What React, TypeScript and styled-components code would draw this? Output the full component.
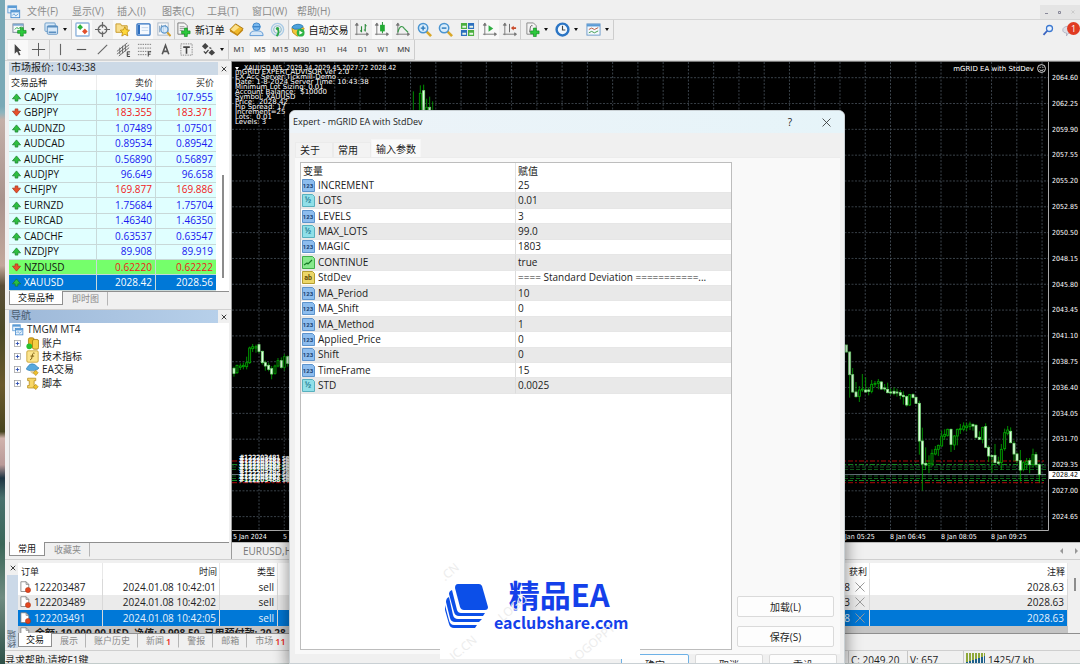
import React from 'react';
import styled, { createGlobalStyle } from 'styled-components';

const UI = `"Open Sans", "Noto Sans CJK SC", sans-serif`;
const CHART = `"DejaVu Sans Condensed", "Liberation Sans", sans-serif`;
const CHART_WIDE = `"DejaVu Sans", "Liberation Sans", sans-serif`;

const Global = createGlobalStyle`
  * { box-sizing: border-box; }
  body { margin: 0; font: 10px/14px ${UI}; color: #1c1c1c; background: #f0f0f0; }
  button { font: inherit; color: inherit; background: none; border: 0; padding: 0; margin: 0; white-space: nowrap; }
  table { border-collapse: separate; border-spacing: 0; table-layout: fixed; width: 100%; }
  th { font-weight: 400; }
  th, td { padding: 0; white-space: nowrap; overflow: hidden; }
  svg { display: block; flex: none; }
`;

/* ---------- frame ---------- */
const Desktop = styled.div`
  position: relative;
  display: grid;
  grid-template-columns: 5px minmax(0, 1fr);
  height: 100vh;
  overflow: hidden;
`;
const Wallpaper = styled.div`
  background: linear-gradient(#7aa9b6 0 16%, #8eb4bd 17%, #c4b0a8 18%, #a9938d 30%, #c3a89c 40%, #5a4f38 43%, #4b4a26 50%, #6a5a2c 58%, #47451f 65%, #d0b3ac 66%, #b99a98 70%, #1c3442 72%, #48706c 75%, #3a6658 82%, #6f8b80 90%, #2f5148 100%);
`;
const Win = styled.div`
  display: flex;
  flex-direction: column;
  min-width: 0;
  height: 100vh;
  background: #f0f0f0;
  border-bottom: 1px solid #c3cccb;
`;
const MenuBar = styled.nav`
  display: flex;
  align-items: flex-end;
  flex: none;
  height: 20px;
  padding-left: 2px;
  border-bottom: 1px solid #d5d5d5;
`;
const MenuItem = styled.button`
  width: 45px;
  height: 17px;
  padding-left: 6px;
  text-align: left;
  color: #8b8b8b;
`;
const WinControls = styled.div`
  display: flex;
  margin-left: auto;
  width: 40px;
  height: 14px;
  background: #e4e4e4;
`;
const WinControl = styled.button`
  flex: 1;
  display: grid;
  place-items: center;
`;
const Toolbar = styled.div`
  display: flex;
  align-items: stretch;
  flex: none;
  height: 20px;
  padding-left: 2px;
`;
const Tools = styled.div<{ $w: number }>`
  display: flex;
  justify-content: space-around;
  align-items: stretch;
  width: ${p => p.$w}px;
  flex: none;
  border-right: 1px solid #cdcdcd;
  border-bottom: 1px solid #d8d8d8;
`;
const Tool = styled.button<{ $on?: boolean; $w?: number }>`
  display: flex;
  align-items: center;
  justify-content: center;
  gap: 4px;
  width: ${p => p.$w ?? 20}px;
  background: ${p => (p.$on ? '#f9f9f9' : 'transparent')};
  color: #111;
`;
const Period = styled(Tool)`
  font: 8px/12px Roboto, sans-serif;
  color: #444;
`;
const Caret = styled.i<{ $c?: string }>`
  border: 2px solid transparent;
  border-top: 3px solid ${p => p.$c ?? '#111'};
  border-bottom: 0;
`;
const ToolbarEnd = styled.div`
  display: flex;
  align-items: center;
  gap: 8px;
  margin-left: auto;
`;
const Badge = styled.span`
  position: absolute;
  top: -2px;
  right: 0;
  width: 13px;
  height: 13px;
  border-radius: 7px;
  background: #e03a22;
  color: #fff;
  font: 9px/13px ${UI};
  text-align: center;
`;
const Notice = styled.button`
  position: relative;
  width: 18px;
  height: 12px;
`;

/* ---------- side panels ---------- */
const Body = styled.div`
  display: flex;
  flex: 1;
  min-height: 0;
  border-top: 1px solid #d4d4d4;
`;
const Side = styled.aside`
  display: flex;
  flex-direction: column;
  width: 227px;
  flex: none;
  padding: 1px 2px 1px 4px;
  border-right: 1px solid #9b9b9b;
`;
const PanelTitle = styled.header<{ $active?: boolean }>`
  display: flex;
  flex: none;
  justify-content: space-between;
  height: 13px;
  line-height: 11px;
  color: #222;
  > span {
    flex: 1;
    padding-left: 2px;
    color: ${p => (p.$active ? '#4a5c70' : '#222')};
    background: ${p => (p.$active ? 'linear-gradient(90deg, #9db8d8, #b7d0ea)' : '#ccd9e6')};
  }
`;
const Close = styled.button`
  display: grid;
  place-items: center;
  width: 11px;
`;
const Quotes = styled.div`
  display: flex;
  flex: none;
  height: 216px;
  background: #fff;
`;
const QuoteTable = styled.table`
  width: 207px;
  height: 216px;
  flex: none;
  th:nth-child(n + 2) { text-align: right; padding-right: 2px; }
  th { height: 15px; border-right: 1px solid #ececec; text-align: left; padding-left: 2px; font-size: 9px; line-height: 13px; }
  th:last-child { border: 0; }
`;
const QuoteRow = styled.tr<{ $kind: string }>`
  line-height: 13px;
  td {
    background: ${p => (p.$kind === 'hit' ? '#75ff6b' : p.$kind === 'sel' ? '#0078d7' : '#e0ffff')};
    border-right: 1px solid #c8dada;
    border-bottom: 1px solid #c8d8d8;
    color: ${p => (p.$kind === 'sel' ? '#fff' : '#111')};
  }
  td:last-child { border-right: 0; }
`;
const Price = styled.td<{ $down: boolean; $sel: boolean }>`
  && {
    text-align: right;
    padding-right: 3px;
    color: ${p => (p.$sel ? '#fff' : p.$down ? '#f01818' : '#1818f0')};
  }
`;
const IconText = styled.span<{ $pad: number }>`
  display: flex;
  align-items: center;
  gap: 3px;
  padding-left: ${p => p.$pad}px;
`;
const ScrollThumb = styled.i<{ $top: number; $h: number }>`
  width: 2px;
  height: ${p => p.$h}px;
  margin: ${p => p.$top}px 0 0 6px;
  background: #8c8c8c;
`;
const TermScroll = styled.div`
  width: 12px;
  flex: none;
  ${ScrollThumb} { display: block; }
`;
const TabStrip = styled.div<{ $pad?: number }>`
  display: flex;
  flex: none;
  height: 16px;
  border-top: 1px solid #8f8f8f;
  font-size: 9px;
  > button { padding: 0 ${p => p.$pad ?? 8}px; }
`;
const PanelTab = styled.button<{ $on?: boolean }>`
  height: 14px;
  margin-top: ${p => (p.$on ? -1 : 0)}px;
  line-height: 14px;
  color: ${p => (p.$on ? '#111' : '#8a8a8a')};
  background: ${p => (p.$on ? '#fff' : 'transparent')};
  border: 1px solid ${p => (p.$on ? '#8f8f8f' : 'transparent')};
  border-top: 0;
  border-right-color: ${p => (p.$on ? '#8f8f8f' : '#b5b5b5')};
  sup { margin-left: 2px; font-size: 9px; line-height: 8px; vertical-align: -1px; font-weight: 600; color: #e21; }
`;
const Split = styled.div`
  flex: none;
  height: 3px;
  margin: 0 -2px 0 -4px;
  border-bottom: 1px solid #d0d0d0;
`;
const Tree = styled.div`
  flex: 1;
  min-height: 0;
  background: #fff;
  border-left: 1px solid #ccc;
  padding: 0 0 0 2px;
`;
const TreeRows = styled.div`
  display: grid;
  grid-auto-rows: 1fr;
  height: 67px;
  line-height: 13px;
`;
const TreeRow = styled.div<{ $child?: boolean }>`
  display: flex;
  align-items: center;
  gap: 3px;
  padding-left: ${p => (p.$child ? 2 : 0)}px;
  > svg + svg { margin-left: 2px; }
`;

/* ---------- chart ---------- */
const ChartArea = styled.main`
  display: flex;
  flex-direction: column;
  flex: 1;
  min-width: 0;
`;
const ChartBox = styled.div`
  position: relative;
  display: grid;
  grid-template-columns: minmax(0, 1fr) 31px;
  flex: 1;
  min-height: 0;
  overflow: hidden;
  background: #000;
  border-top: 1px solid #777;
  font: 7px/8px ${CHART};
  color: #fff;
`;
const Plot = styled.div`
  display: flex;
  overflow: hidden;
`;
const PriceAxis = styled.div`
  display: flex;
  flex-direction: column;
  justify-content: space-between;
  height: 447px;
  margin-top: 12px;
  padding-left: 3px;
`;
const PriceTag = styled.span`
  position: absolute;
  right: 0;
  top: 409px;
  width: 31px;
  height: 8px;
  padding-left: 3px;
  background: #fff;
  color: #000;
`;
const Comment = styled.div`
  position: absolute;
  left: 3px;
  top: 8px;
  font-family: ${CHART_WIDE};
  line-height: 5px;
  white-space: pre;
`;
const Ticker = styled.div`
  position: absolute;
  left: 3px;
  top: 2px;
  display: flex;
  align-items: center;
  gap: 5px;
  white-space: pre;
`;
const Advisor = styled.div`
  position: absolute;
  right: 34px;
  top: 2px;
  display: flex;
  align-items: center;
  gap: 3px;
  font-family: ${CHART_WIDE};
`;
const ChartTabs = styled.div`
  display: flex;
  align-items: center;
  justify-content: space-between;
  flex: none;
  height: 17px;
  padding: 0 2px 0 11px;
  border-top: 1px solid #bbb;
  color: #777;
`;
const Arrows = styled.div`
  display: flex;
  gap: 10px;
`;

/* ---------- terminal ---------- */
const Terminal = styled.section`
  display: grid;
  grid-template-columns: 13px minmax(0, 1fr);
  flex: none;
  height: 91px;
  border-top: 1px solid #cfcfcf;
`;
const TermGrip = styled.div`
  display: grid;
  grid-template-rows: 15px 1fr;
  padding: 0 1px 2px 2px;
`;
const TermName = styled.span`
  background: #cbd9e8;
  writing-mode: vertical-rl;
  transform: rotate(180deg);
  font-size: 9px;
  line-height: 10px;
  color: #53616f;
`;
const TermMain = styled.div`
  display: flex;
  flex-direction: column;
  min-width: 0;
  padding-top: 3px;
`;
const TermBody = styled.div`
  display: flex;
  height: 70px;
  overflow: hidden;
`;
const TermTables = styled.div`
  flex: 1;
  min-width: 0;
  background: #c4c4c4;
`;
const Orders = styled.table`
  height: 63px;
  background: #fff;
  th { height: 16px; text-align: right; font-size: 9px; line-height: 15px; padding-right: 2px; border-right: 1px solid #e8e8e8; }
  th:first-child { text-align: left; padding-left: 3px; }
  td { text-align: right; padding-right: 3px; border-right: 1px solid #d9d9d9; line-height: 14px; }
`;
const OrderRow = styled.tr<{ $bg: string; $fg: string }>`
  background: ${p => p.$bg};
  color: ${p => p.$fg};
`;
const Profit = styled.span`
  display: flex;
  align-items: center;
  justify-content: flex-end;
  gap: 4px;
`;
const Summary = styled.div`
  display: flex;
  align-items: center;
  gap: 4px;
  padding-left: 1px;
  font-weight: 700;
  line-height: 14px;
  white-space: pre;
`;
const StatusBar = styled.footer`
  display: flex;
  flex: none;
  justify-content: space-between;
  height: 13px;
  overflow: hidden;
  border-top: 1px solid #cfcfcf;
  line-height: 18px;
`;
const StatusCells = styled.div`
  display: grid;
  grid-template-columns: 59px 56px 117px;
`;
const StatusCell = styled.span`
  display: flex;
  align-items: flex-start;
  gap: 3px;
  padding-left: 2px;
  border-left: 1px solid #c6c6c6;
  svg { margin-top: 2px; }
`;

/* ---------- dialog ---------- */
const Dialog = styled.div`
  position: absolute;
  left: 289px;
  top: 110px;
  bottom: 0;
  width: 556px;
  display: flex;
  flex-direction: column;
  overflow: hidden;
  background: #f0f0f0;
  border: 1px solid #c9d0d4;
  border-radius: 6px 6px 0 0;
`;
const Shade = styled.div`
  position: absolute;
  left: 289px;
  top: 110px;
  bottom: 0;
  width: 556px;
  box-shadow: 0 3px 14px 2px rgba(0, 0, 0, 0.4);
`;
const DialogTitle = styled.header`
  display: flex;
  align-items: center;
  flex: none;
  height: 22px;
  padding: 0 8px 0 3px;
  background: linear-gradient(90deg, #edf3f8, #e6f4f9);
  > span { flex: 1; font-size: 9px; }
`;
const TitleButton = styled.button`
  display: grid;
  place-items: center;
  width: 20px;
  height: 20px;
  margin-left: 16px;
`;
const DialogTabs = styled.div`
  display: flex;
  align-items: flex-end;
  flex: none;
  height: 24px;
  padding-left: 5px;
`;
const DialogTab = styled.button<{ $on?: boolean }>`
  height: ${p => (p.$on ? 18 : 15)}px;
  width: ${p => (p.$on ? 50 : 38)}px;
  padding-left: 4px;
  text-align: left;
  background: ${p => (p.$on ? '#fafafa' : '#f3f3f3')};
  border: 1px solid ${p => (p.$on ? '#f6f6f6' : '#ebebeb')};
  border-bottom: 0;
  line-height: ${p => (p.$on ? 14 : 13)}px;
`;
const DialogPanel = styled.div`
  display: flex;
  justify-content: space-between;
  flex: 1;
  min-height: 0;
  margin: 0 4px 0 5px;
  padding: 4px 6px 4px 5px;
  background: #f9f9f9;
  border-top: 1px solid #ececec;
`;
const ParamList = styled.div`
  width: 432px;
  background: #fff;
  border: 1px solid #bdbdbd;
`;
const Params = styled.table`
  height: 231px;
  th { height: 15px; text-align: left; line-height: 14px; padding-left: 2px; border-right: 1px solid #e3e3e3; }
  th:last-child, td:last-child { border-right: 0; }
  td { padding-left: 2px; line-height: 13px; border-right: 1px solid #dcdcdc; border-bottom: 1px solid #e6e6e6; text-overflow: ellipsis; }
  td:first-child { padding-left: 1px; }
  tbody tr:nth-child(even) { background: #e9e9e9; }
`;
const ParamName = styled.span`
  display: flex;
  align-items: center;
  gap: 3px;
`;
const SideButtons = styled.div`
  display: flex;
  flex-direction: column;
  justify-content: flex-end;
  gap: 9px;
  padding-bottom: 3px;
`;
const PushButton = styled.button<{ $w: number; $primary?: boolean }>`
  flex: none;
  width: ${p => p.$w}px;
  height: 21px;
  line-height: 18px;
  background: #fdfdfd;
  border: 1px solid ${p => (p.$primary ? '#6db1e6' : '#dadada')};
  border-radius: 2px;
`;
const DialogFooter = styled.footer`
  display: flex;
  justify-content: flex-end;
  gap: 6px;
  flex: none;
  height: 9px;
  overflow: hidden;
  padding-right: 7px;
`;
const Watermark = styled.div`
  position: absolute;
  left: 150px;
  bottom: 4px;
  display: flex;
  align-items: center;
  gap: 6px;
  width: 200px;
  height: 96px;
  overflow: hidden;
  padding: 0 6px 10px 5px;
  background: #fff;
`;
const Brand = styled.div`
  text-align: center;
  color: #1440ea;
  font-family: "Noto Sans CJK SC", sans-serif;
  font-weight: 700;
`;
const BrandName = styled.div`
  font-size: 31px;
  line-height: 32px;
  padding-right: 4px;
`;
const BrandSite = styled.div`
  font-size: 16px;
  line-height: 24px;
`;
const Ghost = styled.span<{ $x: number; $y: number }>`
  position: absolute;
  left: ${p => p.$x}px;
  top: ${p => p.$y}px;
  transform: rotate(-40deg);
  font: 12px/14px ${UI};
  color: #ececec;
`;

/* ---------- icons ---------- */
const Svg = ({ s = 15, children }: { s?: number; children: React.ReactNode }) => (
  <svg width={s} height={s} viewBox="0 0 16 16" fill="none">{children}</svg>
);
const Plus = ({ x, y }: { x: number; y: number }) => (
  <path d={`M${x + 3} ${y}h3v3h3v3h-3v3h-3v-3h-3v-3h3z`} fill="#2cc93c" stroke="#0d8a1c" strokeWidth=".7" />
);
const windows = (
  <>
    <rect x="1" y="1" width="10" height="8" fill="#e6f1fb" stroke="#5b9bd5" />
    <rect x="1" y="1" width="10" height="2.5" fill="#5b9bd5" />
    <rect x="4.500" y="6" width="10" height="8.500" fill="#e6f1fb" stroke="#3f86cc" />
    <rect x="4.500" y="6" width="10" height="2.500" fill="#5b9bd5" />
    <path d="M6 12l2-2 2 2.500 3-2.500" stroke="#5b9bd5" />
  </>
);
const axes = <path d="M3 2v12M1 13h14M3 1l-1.500 2.500h3zM15.500 13l-2-1.500v3z" stroke="#777" fill="#777" />;
const ICONS: Record<string, React.ReactNode> = {
  app: windows,
  newChart: <><rect x="1" y="2" width="11" height="9" fill="#f5f9fd" stroke="#7a8a99" /><path d="M1 3h11" stroke="#7fa8d0" strokeWidth="2" /><path d="M3 8l2-2 2 1 3-2" stroke="#22aa33" /><Plus x={6} y={6} /></>,
  profiles: <><rect x="1" y="1" width="11" height="9" rx="1" fill="#d8e9f8" stroke="#6a9cc9" /><rect x="3.500" y="4" width="11" height="9" rx="1" fill="#d8e9f8" stroke="#5b8fc0" /><path d="M3.500 5h11M5 11h8" stroke="#5b8fc0" strokeWidth="1.500" /></>,
  market: <><rect x="1" y="1" width="14" height="14" rx="1" fill="#fff" stroke="#8fb4dc" strokeWidth="1.500" /><path d="M5.500 2.500l3 3-3 3-3-3z" fill="#2bb33a" /><path d="M10.500 7l3 3-3 3-3-3z" fill="#e2502c" /></>,
  target: <><circle cx="8" cy="8" r="4.500" stroke="#666" strokeWidth="1.500" /><path d="M8 0v6M8 10v6M0 8h6M10 8h6" stroke="#666" strokeWidth="1.300" /></>,
  folder: <><path d="M1 2h5l1 2h6v7H1z" fill="#f8de8c" stroke="#c79a2a" /><path d="M10.500 5l1.600 3.300 3.400.5-2.500 2.400.7 3.600-3.200-1.700L7.300 15l.7-3.800-2.400-2.400 3.400-.5z" fill="#ffd83a" stroke="#b8860b" strokeWidth=".8" /></>,
  terminal: <><rect x="1" y="2" width="14" height="12" rx="1" fill="#f6faff" stroke="#2d6fc0" strokeWidth="1.300" /><path d="M3 3v10" stroke="#2d6fc0" strokeWidth="2.500" /><path d="M6 6h7M6 9h7" stroke="#c2d6ec" /></>,
  tester: <><rect x="2" y="1" width="11" height="13" fill="#fafafa" stroke="#a8b6c4" /><path d="M4 4v7M6 3v6M8 5v6M10 3v4" stroke="#6a90b5" /><circle cx="9" cy="8" r="3.800" fill="#cfe6fa" fillOpacity=".8" stroke="#5d97cc" strokeWidth="1.300" /><path d="M12 11l3.500 4" stroke="#d4a02a" strokeWidth="2.200" /></>,
  order: <><path d="M2 1h7l3 3v9H2z" fill="#f4f4f4" stroke="#777" /><path d="M4 5h5M4 7h5M4 9h3" stroke="#999" /><Plus x={6} y={6.5} /></>,
  gold: <><path d="M1 8l6-6 8 5-6 7z" fill="#f0b92a" stroke="#a87410" /><path d="M2 8l5-5 4 2.500-6 5z" fill="#fbe08a" /><path d="M1 8v2l8 5 6-6V7l-6 6z" fill="#c58a17" /></>,
  person: <><circle cx="8" cy="5" r="4" fill="#79b8ee" stroke="#3d86cb" /><path d="M1 14.500c0-5 4-5 7-5s7 0 7 5z" fill="#d5e6f6" stroke="#5a96d4" /><path d="M4 5h8" stroke="#3d86cb" strokeWidth="1.500" /></>,
  signal: <><circle cx="8" cy="8" r="6.500" stroke="#a9cbe6" strokeWidth="1.500" /><circle cx="8" cy="8" r="4" stroke="#8fbcd0" strokeWidth="1.300" /><circle cx="8" cy="7" r="1.800" fill="#2ea84a" /><path d="M8 7c2 3 1 6-1 8" stroke="#2ea84a" strokeWidth="2" /></>,
  auto: <><path d="M1 6l7-4 7 4-2 6-6 3-5-4z" fill="#f3c63a" stroke="#b98a18" /><path d="M1 5c2-4 10-5 13-1l-4 3H4z" fill="#4ca3dd" stroke="#2878b0" /><circle cx="11" cy="11" r="4.500" fill="#2fb344" /><path d="M9.500 8.700v4.600l4-2.300z" fill="#fff" /></>,
  bars: <>{axes}<path d="M8 4.500v6.500M6.500 9.500H8M12 2v8M12 4h1.500M10.500 8.500H12" stroke="#2a8a3a" strokeWidth="1.200" /></>,
  candle: <>{axes}<path d="M9 0v12" stroke="#1a8a2a" /><rect x="6.500" y="3" width="5" height="7" fill="#22aa33" /></>,
  line: <>{axes}<path d="M3 11c2-8 5-7 7-4l4 4" stroke="#3b9a4a" strokeWidth="1.300" /></>,
  zoomIn: <><path d="M10 10l5 5" stroke="#d9a728" strokeWidth="2.800" /><circle cx="6.500" cy="6.500" r="5" fill="#d9edfb" stroke="#4b95d1" strokeWidth="1.600" /><path d="M4 6.500h5M6.500 4v5" stroke="#2a78bb" strokeWidth="1.500" /></>,
  zoomOut: <><path d="M10 10l5 5" stroke="#d9a728" strokeWidth="2.800" /><circle cx="6.500" cy="6.500" r="5" fill="#d9edfb" stroke="#4b95d1" strokeWidth="1.600" /><path d="M4 6.500h5" stroke="#2a78bb" strokeWidth="1.500" /></>,
  tile: <><path d="M1 1h6.500v6.500H1zM8.500 8.500H15V15H8.500z" fill="#4caf3f" /><path d="M8.500 1H15v6.500H8.500zM1 8.500h6.500V15H1z" fill="#2c6fbe" /><path d="M2.500 5h4M10 5h4M2.500 12.500h4M10 12.500h4" stroke="#e9f5e9" strokeWidth="2" /></>,
  scroll: <>{axes}<path d="M7 3.500v7l5-3.500z" fill="#2fae43" /></>,
  shift: <>{axes}<path d="M8 2v9" stroke="#666" /><path d="M9.500 6.500l3-2.500v1.500H15v2h-2.500V9z" fill="#c94a2a" /></>,
  indic: <><path d="M2 1h7l3 3v9H2z" fill="#f4f4f4" stroke="#888" /><path d="M8 4c-2-1-2 1-2.500 3L5 11" stroke="#555" /><Plus x={6} y={6.5} /></>,
  clock: <><circle cx="8" cy="8" r="6.300" fill="#f2f8fd" stroke="#2b75c4" strokeWidth="2.600" /><path d="M8 4v4.500h3" stroke="#444" strokeWidth="1.200" /></>,
  template: <><rect x="1" y="2" width="14" height="12" fill="#f3f8fd" stroke="#6c9bca" /><path d="M1 3.500h14" stroke="#5b9bd5" strokeWidth="2.500" /><path d="M3 8l3-1.500 3 1.500 4-2" stroke="#b5563b" /><path d="M3 11.500l3-1.500 3 1.500 4-2" stroke="#3b9a4a" /></>,
  cursor: <path d="M5 2v10.500l2.500-2.300 2 4.300 1.700-.8-2-4.200H12z" fill="#444" />,
  cross: <path d="M8 1v14M1 8h14" stroke="#555" />,
  vline: <path d="M8 2v12" stroke="#666" strokeWidth="1.200" />,
  hline: <path d="M3 8h10" stroke="#555" strokeWidth="1.200" />,
  trend: <path d="M3 13L13 3" stroke="#666" strokeWidth="1.200" />,
  channel: <><path d="M1 10L12 1M1 13L14 3M3 15L14 6M4 6v7M7 4v8M10 3v7" stroke="#666" /><path d="M15 10.500h-3v5h3M12 13h2.500" stroke="#333" /></>,
  fibo: <><path d="M1 2.500h14M1 6.500h14M1 10h14M1 13.500h9" stroke="#777" strokeDasharray="1.500 1" /><path d="M15 10.500h-3v5M12 13h2.500" stroke="#333" /></>,
  text: <path d="M4.500 13L8 3.500l3.500 9.500M6 10h4" stroke="#555" strokeWidth="1.700" />,
  label: <><rect x="2" y="2" width="12" height="12" stroke="#888" strokeDasharray="1.500 1" /><path d="M4.500 5.500h7M8 5.500v7" stroke="#444" strokeWidth="1.700" /></>,
  marks: <><path d="M1 4.500L4.500 1 8 4.500 4.500 8z" fill="#444" /><path d="M8 11.500L11.500 8l3.500 3.500-3.500 3z" fill="#444" /><path d="M3 10l2 2 3-3.500M9 6l2 1" stroke="#444" strokeWidth="1.300" /></>,
  find: <><circle cx="10" cy="6" r="4" stroke="#3b78d0" strokeWidth="1.700" fill="#eaf3ff" /><path d="M7 9l-5 5.500" stroke="#3b64c0" strokeWidth="2.400" /></>,
  chat: <path d="M1 8c0-3 3-5 7-5s7 2 7 5-3 4.500-7 4.500L6 16v-4C3 12 1 10.500 1 8z" fill="#dcdfe6" stroke="#aab" />,
  accounts: <><rect x="3" y="1" width="7" height="12" rx="2" fill="#e8b41d" stroke="#a67c0e" /><rect x="8" y="3" width="7.500" height="12" rx="2" fill="#f5cf45" stroke="#a67c0e" /><circle cx="4" cy="11.500" r="3.500" fill="#27c12f" /></>,
  func: <><rect x="1" y="1" width="14" height="14" rx="1.500" fill="#fbe48d" stroke="#c59d2c" /><path d="M10.500 4c-2-1-2.500 1-3 4s-.8 4-2.500 4M5.500 7.500h4.500" stroke="#7a5c10" strokeWidth="1.200" /></>,
  hat: <><path d="M0 7c2-1 3-6 7.500-6S13 5 16 6c-2 4-13 5-16 1z" fill="#58a8dc" stroke="#2b7bb0" strokeWidth=".8" /><path d="M5 9.500c1 3 4 5 6 4l3-4" fill="#e0cfa5" /><path d="M12 9l3 3-3 3.500L9 12z" fill="#efc12c" stroke="#a97f10" strokeWidth=".7" /></>,
  script: <><path d="M2 1.500h10v3h-2v6h2v3H2v-3h2v-6H2z" fill="#f7d768" stroke="#b98f20" /><path d="M12 9l3 3-3 3.500L9 12z" fill="#efc12c" stroke="#a97f10" strokeWidth=".7" /></>,
  sheet: <><path d="M2.500 1h7L13 4.500V14H2.500z" fill="#fff" stroke="#777" /><path d="M9.500 1v3.500H13" stroke="#777" /><circle cx="12" cy="12" r="3.500" fill="#e2461f" stroke="#a83010" strokeWidth=".6" /></>,
  cross2: <path d="M2 2l12 12M14 2L2 14" stroke="#999" strokeWidth="1.300" />,
  closeX: <path d="M2 2l12 12M14 2L2 14" stroke="#222" strokeWidth="2.300" />,
  thinX: <path d="M1 1l14 14M15 1L1 15" stroke="#333" strokeWidth="1.500" />,
  plusBox: <><rect x="1" y="1" width="14" height="14" fill="#fff" stroke="#999" strokeWidth="1.600" /><path d="M4 8h8M8 4v8" stroke="#2a4bb0" strokeWidth="2" /></>,
  smile: <><circle cx="8" cy="8" r="7" stroke="#eee" strokeWidth="1.600" /><path d="M4.500 9.500c1 3 6 3 7 0M5.500 5v2M10.500 5v2" stroke="#eee" strokeWidth="1.600" /></>,
};
const Icon = ({ n, s }: { n: string; s?: number }) => <Svg s={s}>{ICONS[n]}</Svg>;

const Arrow = ({ down }: { down: boolean }) => (
  <svg width="9" height="9" viewBox="0 0 10 10">
    <path
      d={down ? 'M3.500 1h3v2.500H9.500L5 9 .500 3.500H3.500z' : 'M3.500 9h3V6.500H9.500L5 1 .500 6.500H3.500z'}
      fill={down ? '#e8502a' : '#2cc040'}
      stroke={down ? '#a8301a' : '#177a2a'}
      strokeWidth=".8"
    />
  </svg>
);

const TYPE: Record<string, [string, string, string]> = {
  int: ['#8dbdee', '#5c93cc', '123'],
  dbl: ['#90dfe8', '#58b0be', '½'],
  str: ['#ecd768', '#b59c30', 'ab'],
  bool: ['#86e88c', '#3fae4a', ''],
};
const TypeIcon = ({ t }: { t: string }) => {
  const [fill, edge, label] = TYPE[t];
  return (
    <svg width="13" height="13" viewBox="0 0 13 13">
      <path d="M.500.500h10l2 2v10H.500z" fill={fill} stroke={edge} />
      {label ? (
        <text x="6" y="9" fontSize={t === 'int' ? 6 : t === 'dbl' ? 9 : 7} fontWeight="700" fontFamily="Roboto, sans-serif" textAnchor="middle" fill={t === 'dbl' ? '#2a7f96' : t === 'str' ? '#5e4c08' : '#17406e'}>{label}</text>
      ) : (
        <path d="M2 9l3-2 1 1 4-4" fill="none" stroke="#157a25" strokeWidth="1.200" />
      )}
    </svg>
  );
};

/* ---------- data ---------- */
const quotes: [string, string, string, boolean, string?][] = [
  ['CADJPY', '107.940', '107.955', false],
  ['GBPJPY', '183.355', '183.371', true],
  ['AUDNZD', '1.07489', '1.07501', false],
  ['AUDCAD', '0.89534', '0.89542', false],
  ['AUDCHF', '0.56890', '0.56897', false],
  ['AUDJPY', '96.649', '96.658', false],
  ['CHFJPY', '169.877', '169.886', true],
  ['EURNZD', '1.75684', '1.75704', false],
  ['EURCAD', '1.46340', '1.46350', false],
  ['CADCHF', '0.63537', '0.63547', false],
  ['NZDJPY', '89.908', '89.919', false],
  ['NZDUSD', '0.62220', '0.62222', true, 'hit'],
  ['XAUUSD', '2028.42', '2028.56', false, 'sel'],
];
const params: [string, string, string][] = [
  ['int', 'INCREMENT', '25'],
  ['dbl', 'LOTS', '0.01'],
  ['int', 'LEVELS', '3'],
  ['dbl', 'MAX_LOTS', '99.0'],
  ['int', 'MAGIC', '1803'],
  ['bool', 'CONTINUE', 'true'],
  ['str', 'StdDev', '==== Standard Deviation ===========...'],
  ['int', 'MA_Period', '10'],
  ['int', 'MA_Shift', '0'],
  ['int', 'MA_Method', '1'],
  ['int', 'Applied_Price', '0'],
  ['int', 'Shift', '0'],
  ['int', 'TimeFrame', '15'],
  ['dbl', 'STD', '0.0025'],
];
const comment = [
  'mGRID EXPERT ADVISOR ver 2.0',
  'EX Acc Server:Tickmill-Demo',
  'Date: 1-8-2024 Server Time: 10:43:38',
  'Minimum Lot Sizing: 0.01',
  'Account Balance:  $10000',
  'Symbol: XAUUSD',
  'Price:  2028.42',
  'Pip Spread: 17',
  'Increment=25',
  'Lots:  0.01',
  'Levels: 3',
];
const prices = Array.from({ length: 18 }, (_, i) => (2064.6 - i * 2.35).toFixed(2));

/* x, high, body top, body bottom, low, rising; three units to a pixel */
type Candle = [number, number, number, number, number, number];
const early: Candle[] = [
  [18, 110, 115, 130, 140, 0], [27, 104, 106, 128, 132, 1], [37, 100, 108, 112, 120, 1], [46, 98, 106, 110, 118, 1],
  [56, 80, 98, 110, 118, 1], [65, 50, 54, 98, 102, 1], [74, 42, 50, 56, 66, 1], [84, 44, 50, 54, 68, 1],
  [93, 42, 44, 64, 70, 0], [103, 62, 64, 98, 104, 0], [112, 92, 98, 108, 122, 0], [122, 98, 106, 118, 124, 0],
  [131, 108, 116, 132, 148, 0], [141, 104, 108, 130, 134, 1], [150, 84, 92, 108, 112, 1], [160, 82, 92, 112, 116, 0],
  [169, 72, 80, 112, 122, 1], [179, 76, 80, 100, 110, 0],
];
const spike: Candle[] = [
  [340, 274, 340, 342, 350, 1], [361, 256, 280, 340, 350, 1], [371, 254, 272, 340, 350, 0],
  [380, 296, 322, 340, 350, 1], [389, 290, 322, 340, 350, 0], [398, 304, 340, 342, 350, 1],
];
const late: Candle[] = [
  [19, 45, 45, 66, 68, 0], [29, 64, 66, 134, 203, 0], [38, 114, 134, 186, 188, 0], [48, 156, 186, 200, 203, 0],
  [58, 168, 180, 199, 216, 1], [67, 132, 177, 180, 186, 1], [77, 142, 180, 186, 187, 0], [86, 172, 180, 184, 196, 0],
  [95, 150, 163, 184, 190, 1], [105, 153, 160, 163, 172, 1], [115, 147, 155, 160, 178, 1], [124, 153, 156, 177, 180, 0],
  [134, 162, 174, 177, 184, 0], [143, 158, 178, 188, 190, 0], [152, 176, 186, 189, 194, 0], [162, 172, 184, 190, 196, 0],
  [171, 176, 186, 189, 200, 0], [181, 180, 188, 196, 208, 0], [190, 184, 196, 200, 224, 0], [200, 196, 200, 225, 230, 0],
  [209, 192, 194, 225, 228, 1], [219, 190, 194, 202, 206, 0], [228, 200, 202, 220, 222, 0], [238, 212, 220, 333, 374, 0],
  [247, 293, 333, 402, 482, 0], [257, 352, 400, 405, 420, 0], [267, 376, 400, 406, 430, 1], [276, 358, 370, 402, 410, 1],
  [286, 348, 358, 372, 376, 1], [295, 344, 346, 358, 378, 1], [305, 302, 318, 348, 350, 1], [314, 298, 313, 319, 330, 1],
  [323, 296, 298, 316, 320, 1], [333, 296, 298, 343, 366, 0], [343, 315, 318, 345, 360, 1], [352, 296, 298, 318, 346, 1],
  [361, 282, 296, 299, 312, 1], [371, 277, 288, 298, 304, 1], [380, 278, 288, 293, 304, 1], [390, 275, 282, 290, 300, 1],
  [399, 280, 284, 288, 302, 0], [408, 282, 286, 322, 326, 0], [418, 304, 322, 328, 330, 0], [428, 290, 292, 328, 340, 1],
  [437, 280, 290, 352, 355, 0], [446, 346, 352, 378, 396, 0], [456, 376, 376, 380, 428, 0], [465, 342, 376, 398, 400, 0],
  [475, 380, 396, 400, 404, 0], [484, 342, 358, 398, 420, 1], [494, 296, 308, 356, 362, 1], [503, 288, 300, 310, 316, 1],
  [512, 292, 304, 338, 340, 0], [522, 332, 340, 372, 394, 0], [531, 368, 372, 392, 400, 0], [541, 360, 392, 420, 455, 0],
  [550, 392, 398, 418, 424, 1], [560, 384, 394, 400, 418, 1], [569, 384, 392, 404, 430, 0], [579, 356, 374, 404, 412, 1],
  [588, 366, 374, 404, 412, 0], [598, 400, 404, 434, 458, 0],
];
const Candles = ({ data, x, y }: { data: Candle[]; x: number; y: number }) => (
  <g transform={`translate(${x} ${y}) scale(.33333)`} stroke="#00a800" strokeWidth="2.500">
    {data.map(([cx, hi, top, bot, lo, up]) => (
      <g key={cx}>
        <path d={`M${cx} ${hi}V${lo}`} />
        <rect x={cx - 3} y={top} width="6" height={bot - top} fill={up ? '#001800' : '#eaffea'} stroke={up ? '#00a800' : '#7fe07f'} />
      </g>
    ))}
  </g>
);

/* horizontal order lines: y, colour, dash */
const levels: [number, string, string][] = [
  [399, '#b00808', '5 2 2 2'], [402.5, '#128a22', '5 2 2 2'], [405, '#0f5a1c', '4 2'], [407.5, '#0f5a1c', '4 2'],
  [412.5, '#66727c', ''], [414, '#0f5a1c', '4 2'], [416.5, '#0f6a1c', '4 2'], [418.5, '#128a22', '5 2 2 2'], [420.7, '#b00808', '5 2 2 2'],
];
const times: [number, string][] = [
  [0, '5 Jan 2024'], [50, '5 Jan 12:15'], [606, '8 Jan 05:25'], [657, '8 Jan 06:45'], [708, '8 Jan 08:05'], [758, '8 Jan 09:25'],
];

const PriceChart = () => (
  <svg width="817" height="482" viewBox="0 0 817 482" fill="none">
    <g stroke="#4a545e" strokeDasharray="2 1.500" strokeWidth=".8">
      {Array.from({ length: 32 }, (_, i) => <path key={i} d={`M${27 + i * 25.26} 0V469`} />)}
      {prices.map((p, i) => <path key={p} d={`M0 ${15.7 + i * 25.82}H816`} />)}
    </g>
    {levels.map(([y, c, dash]) => <path key={y} d={`M0 ${y}H814`} stroke={c} strokeDasharray={dash} />)}
    <Candles data={early} x={-4} y={268} />
    <Candles data={spike} x={68} y={-62} />
    <Candles data={late} x={608} y={268} />
    <g fill="#fff" stroke="#fff" strokeWidth=".3" fontFamily={CHART} fontSize="7">
      {[398, 401, 404, 407, 410, 414, 417, 420].map((y, i) => (
        <text key={y} x="7" y={y}>{`#12220348${i + 1} sell`}</text>
      ))}
    </g>
    <path d="M0 468.500H816.500V0" stroke="#aaa" />
    <g fill="#fff" fontFamily={CHART} fontSize="7">
      {times.map(([x, t]) => <text key={t} x={x + 1} y="477">{t}</text>)}
    </g>
  </svg>
);

const Btn = ({ n, on, menu }: { n: string; on?: boolean; menu?: boolean }) => (
  <Tool $on={on} $w={menu ? 30 : 20} aria-label={n}>
    <Icon n={n} s={15} />
    {menu && <Caret />}
  </Tool>
);

export default function App() {
  return (
    <Desktop>
      <Global />
      <Wallpaper />
      <Win>
        <MenuBar>
          <Icon n="app" s={14} />
          {['文件(F)', '显示(V)', '插入(I)', '图表(C)', '工具(T)', '窗口(W)', '帮助(H)'].map(m => <MenuItem key={m}>{m}</MenuItem>)}
          <WinControls>
            <WinControl aria-label="minimize"><svg width="4" height="4"><path d="M0 3.500h3" stroke="#889" /></svg></WinControl>
            <WinControl aria-label="restore"><svg width="4" height="4"><path d="M.500 1.500h2v2h-2z" fill="none" stroke="#889" /></svg></WinControl>
            <WinControl aria-label="close"><Icon n="cross2" s={4} /></WinControl>
          </WinControls>
        </MenuBar>
        <Toolbar>
          <Tools $w={65}><Btn n="newChart" menu /><Btn n="profiles" menu /></Tools>
          <Tools $w={103}><Btn n="market" on /><Btn n="target" /><Btn n="folder" on /><Btn n="terminal" on /><Btn n="tester" /></Tools>
          <Tools $w={114}>
            <Tool $w={50}><Icon n="order" s={15} />新订单</Tool>
            <Btn n="gold" /><Btn n="person" /><Btn n="signal" />
          </Tools>
          <Tools $w={62}><Tool $on $w={60}><Icon n="auto" s={14} />自动交易</Tool></Tools>
          <Tools $w={63}><Btn n="bars" /><Btn n="candle" on /><Btn n="line" /></Tools>
          <Tools $w={65}><Btn n="zoomIn" /><Btn n="zoomOut" /><Btn n="tile" /></Tools>
          <Tools $w={42}><Btn n="scroll" on /><Btn n="shift" /></Tools>
          <Tools $w={93}><Btn n="indic" menu /><Btn n="clock" menu /><Btn n="template" menu /></Tools>
          <ToolbarEnd>
            <Icon n="find" s={12} />
            <Notice aria-label="messages"><Icon n="chat" s={12} /><Badge>1</Badge></Notice>
          </ToolbarEnd>
        </Toolbar>
        <Toolbar>
          <Tools $w={43}><Btn n="cursor" on /><Btn n="cross" /></Tools>
          <Tools $w={179}>
            {['vline', 'hline', 'trend', 'channel', 'fibo', 'text', 'label'].map(n => <Btn key={n} n={n} />)}
            <Btn n="marks" menu />
          </Tools>
          <Tools $w={186}>
            {['M1', 'M5', 'M15', 'M30', 'H1', 'H4', 'D1', 'W1', 'MN'].map(t => <Period key={t} $on={t === 'M5'}>{t}</Period>)}
          </Tools>
        </Toolbar>

        <Body>
          <Side>
            <PanelTitle><span>市场报价: 10:43:38</span><Close aria-label="close"><Icon n="closeX" s={6} /></Close></PanelTitle>
            <Quotes>
              <QuoteTable>
                <colgroup><col style={{ width: 88 }} /><col style={{ width: 59 }} /><col /></colgroup>
                <thead><tr><th>交易品种</th><th>卖价</th><th>买价</th></tr></thead>
                <tbody>
                  {quotes.map(([s, bid, ask, down, kind]) => (
                    <QuoteRow key={s} $kind={kind ?? ''}>
                      <td><IconText $pad={3}><Arrow down={down} />{s}</IconText></td>
                      <Price $down={down} $sel={kind === 'sel'}>{bid}</Price>
                      <Price $down={down} $sel={kind === 'sel'}>{ask}</Price>
                    </QuoteRow>
                  ))}
                </tbody>
              </QuoteTable>
              <ScrollThumb $top={100} $h={103} />
            </Quotes>
            <TabStrip><PanelTab $on>交易品种</PanelTab><PanelTab>即时图</PanelTab></TabStrip>
            <Split />
            <PanelTitle $active><span>导航</span><Close aria-label="close"><Icon n="closeX" s={6} /></Close></PanelTitle>
            <Tree>
              <TreeRows>
                <TreeRow><Icon n="app" s={12} />TMGM MT4</TreeRow>
                {[['accounts', '账户'], ['func', '技术指标'], ['hat', 'EA交易'], ['script', '脚本']].map(([i, t]) => (
                  <TreeRow key={i} $child><Icon n="plusBox" s={7} /><Icon n={i} s={13} />{t}</TreeRow>
                ))}
              </TreeRows>
            </Tree>
            <TabStrip><PanelTab $on>常用</PanelTab><PanelTab>收藏夹</PanelTab></TabStrip>
          </Side>

          <ChartArea>
            <ChartBox>
              <Plot><PriceChart /></Plot>
              <PriceAxis>{prices.map(p => <span key={p}>{p}</span>)}</PriceAxis>
              <PriceTag>2028.42</PriceTag>
              <Ticker><Caret $c="#fff" />{'XAUUSD,M5  2029.34 2029.45 2027.72 2028.42'}</Ticker>
              <Comment>{comment.join('\n')}</Comment>
              <Advisor>mGRID EA with StdDev<Icon n="smile" s={9} /></Advisor>
            </ChartBox>
            <ChartTabs>
              <span>EURUSD,H1</span>
              <Arrows>
                <svg width="4" height="6"><path d="M3 0v6L0 3z" fill="#999" /></svg>
                <svg width="4" height="6"><path d="M1 0v6l3-3z" fill="#999" /></svg>
              </Arrows>
            </ChartTabs>
          </ChartArea>
        </Body>

        <Terminal>
          <TermGrip><Close aria-label="close"><Icon n="closeX" s={6} /></Close><TermName>终端</TermName></TermGrip>
          <TermMain>
            <TermBody>
              <TermTables>
                <Orders>
                  <colgroup><col style={{ width: 85 }} /><col style={{ width: 117 }} /><col style={{ width: 58 }} /><col style={{ width: 592 }} /><col /></colgroup>
                  <thead><tr><th>订单</th><th>时间</th><th>类型</th><th>获利</th><th>注释</th></tr></thead>
                  <tbody>
                    {[
                      ['122203487', '2024.01.08 10:42:01', '-0.38', '#fff', '#222'],
                      ['122203489', '2024.01.08 10:42:02', '-0.43', '#ebebeb', '#222'],
                      ['122203491', '2024.01.08 10:42:05', '-0.68', '#0078d7', '#e8f2fb'],
                    ].map(([id, time, profit, bg, fg]) => (
                      <OrderRow key={id} $bg={bg} $fg={fg}>
                        <td><IconText $pad={1}><Icon n="sheet" s={12} />{id}</IconText></td>
                        <td>{time}</td>
                        <td>sell</td>
                        <td><Profit>{profit}<Icon n="cross2" s={12} /></Profit></td>
                        <td>2028.63</td>
                      </OrderRow>
                    ))}
                  </tbody>
                </Orders>
                <Summary><Icon n="sheet" s={12} />{'余额: 10 000.00 USD  净值: 9 998.50  已用预付款: 20.28'}</Summary>
              </TermTables>
              <TermScroll><ScrollThumb $top={15} $h={13} /></TermScroll>
            </TermBody>
            <TabStrip $pad={7}>
              <PanelTab $on>交易</PanelTab><PanelTab>展示</PanelTab><PanelTab>账户历史</PanelTab><PanelTab>新闻<sup>1</sup></PanelTab>
              <PanelTab>警报</PanelTab><PanelTab>邮箱</PanelTab><PanelTab>市场<sup>11</sup></PanelTab>
            </TabStrip>
          </TermMain>
        </Terminal>
        <StatusBar>
          <span>寻求帮助,请按F1键</span>
          <StatusCells>
            <StatusCell>C: 2049.20</StatusCell>
            <StatusCell>V: 657</StatusCell>
            <StatusCell>
              <svg width="19" height="12">
                {Array.from({ length: 7 }, (_, i) => (
                  <g key={i}>
                    <path d={`M${i * 3 + 1} 0V12`} stroke="#8fa83a" strokeWidth="2" />
                    <path d={`M${i * 3 + 1} ${9 - i}V12`} stroke="#1d5f8a" strokeWidth="2" />
                  </g>
                ))}
              </svg>
              1425/7 kb
            </StatusCell>
          </StatusCells>
        </StatusBar>
      </Win>

      <Shade />
      <Dialog role="dialog" aria-label="Expert">
        <DialogTitle>
          <span>Expert - mGRID EA with StdDev</span>
          <TitleButton>?</TitleButton>
          <TitleButton aria-label="close"><Icon n="thinX" s={9} /></TitleButton>
        </DialogTitle>
        <DialogTabs><DialogTab>关于</DialogTab><DialogTab>常用</DialogTab><DialogTab $on>输入参数</DialogTab></DialogTabs>
        <DialogPanel>
          <ParamList>
            <Params>
              <colgroup><col style={{ width: 215 }} /><col /></colgroup>
              <thead><tr><th>变量</th><th>赋值</th></tr></thead>
              <tbody>
                {params.map(([t, name, value]) => (
                  <tr key={name}><td><ParamName><TypeIcon t={t} />{name}</ParamName></td><td>{value}</td></tr>
                ))}
              </tbody>
            </Params>
          </ParamList>
          <SideButtons><PushButton $w={97}>加载(L)</PushButton><PushButton $w={97}>保存(S)</PushButton></SideButtons>
        </DialogPanel>
        <DialogFooter><PushButton $w={68} $primary>确定</PushButton><PushButton $w={68}>取消</PushButton><PushButton $w={68}>重设</PushButton></DialogFooter>
        <Watermark>
          <Ghost $x={0} $y={2}>.CN</Ghost>
          <Ghost $x={56} $y={38}>LOGO</Ghost>
          <Ghost $x={8} $y={78}>IC.CN</Ghost>
          <Ghost $x={125} $y={74}>LOGOPPT</Ghost>
          <svg width="43" height="44" viewBox="0 0 43 44" fill="#0c4fe8">
            <path d="M13 0h21q2 0 3 2l6 21q0 3-3 3H19q-3 0-4-3L10 4q0-4 3-4z" />
            <path d="M7 6L12 26q1 3 4 3h24l-2 3H14q-4 0-5-4L4 10q0-3 3-4z" />
            <path d="M4 13L8 31q1 4 5 4h24l-3 3H10q-4 0-5-4L1 18q0-4 3-5z" />
            <path d="M0 21L4 36q1 5 5 5h23l-2 3H9q-4 0-5-4L0 26z" />
          </svg>
          <Brand><BrandName>精品EA</BrandName><BrandSite>eaclubshare.com</BrandSite></Brand>
        </Watermark>
      </Dialog>
    </Desktop>
  );
}
